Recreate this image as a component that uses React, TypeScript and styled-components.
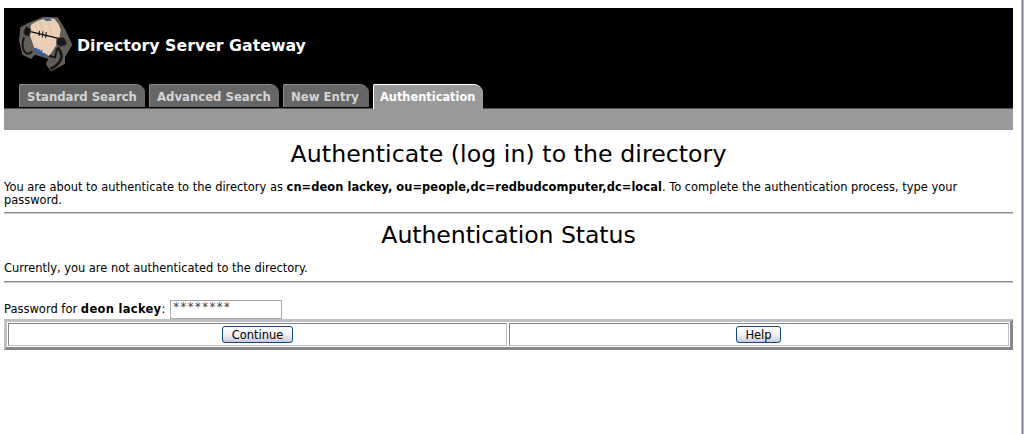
import React from "react";
import styled, { createGlobalStyle } from "styled-components";

const Global = createGlobalStyle`
  html, body { margin: 0; padding: 0; background: #fff; }
  body { font-family: "DejaVu Sans", Verdana, sans-serif; font-size: 11.5px; color: #000; }
`;

const Screen = styled.div`
  width: 1025px;
  height: 434px;
  overflow: hidden;
  display: flex;
  background: #fff;
`;

const Page = styled.div`
  width: 1009px;
  margin-left: 4px;
  padding-top: 8px;
`;

const WindowEdge = styled.div`
  width: 3px;
  margin-left: 8px;
  height: 434px;
  background: linear-gradient(90deg, #c8c8d4 0 1px, #76769a 1px 2px, #b8b8c8 2px 3px);
`;

const Header = styled.div`
  background: #000;
  height: 100px;
  display: flex;
  flex-direction: column;
`;

const Brand = styled.div`
  display: flex;
  align-items: center;
  height: 76px;
  padding-left: 11px;
`;

const LogoMark = styled.svg`
  width: 60px;
  height: 60px;
  margin-bottom: 4px;
  flex: none;
`;

const BrandTitle = styled.div`
  color: #fff;
  font-size: 15.75px;
  font-weight: bold;
  margin-left: 2px;
  margin-top: -1px;
`;

const Tabs = styled.div`
  display: flex;
  gap: 4px;
  padding-left: 15px;
  height: 24px;
`;

const Tab = styled.div<{ $active?: boolean; $w: number }>`
  width: ${(p) => p.$w}px;
  box-sizing: border-box;
  height: ${(p) => (p.$active ? 25 : 23)}px;
  background: ${(p) => (p.$active ? "#999" : "#666")};
  color: ${(p) => (p.$active ? "#fff" : "#d4d4d4")};
  border-top: 1px solid ${(p) => (p.$active ? "#fff" : "#888")};
  border-left: 1px solid ${(p) => (p.$active ? "#fff" : "#888")};
  border-top-right-radius: 9px;
  border-top-left-radius: 2px;
  font-size: ${(p) => (p.$active ? 11.4 : 11.7)}px;
  font-weight: bold;
  line-height: 24px;
  padding-left: ${(p) => (p.$active ? 6 : 7)}px;
  white-space: nowrap;
  position: relative;
  z-index: 1;
`;

const SubBar = styled.div`
  height: 22px;
  background: #999;
  border-top: 1px solid #555;
  box-sizing: border-box;
`;

const Heading = styled.h1<{ $top: number; $track: number }>`
  margin: ${(p) => p.$top}px 0 0;
  font-size: 23.65px;
  font-weight: normal;
  line-height: 29px;
  letter-spacing: ${(p) => p.$track}px;
  text-align: center;
`;

const Paragraph = styled.p`
  margin: 12px 0 0;
  font-size: 11.45px;
  line-height: 13px;
`;

const Emphasis = styled.b<{ $track: number }>`
  letter-spacing: ${(p) => p.$track}px;
`;

const Rule = styled.hr<{ $top: number }>`
  margin: ${(p) => p.$top}px 0 0;
  height: 0;
  border: none;
  border-top: 1px solid #888;
  border-bottom: 1px solid #ccc;
`;

const FieldRow = styled.div`
  display: flex;
  align-items: center;
  margin-top: 16px;
  height: 20px;
`;

const PasswordInput = styled.input`
  box-sizing: border-box;
  width: 112px;
  height: 19px;
  margin-left: 5px;
  border: 1px solid #aaa;
  padding: 0 2px 4px;
  font-family: "DejaVu Sans", sans-serif;
  font-size: 11.5px;
  letter-spacing: 1.5px;
  color: #444;
  background: #fff;
  outline: none;
`;

const ButtonTable = styled.div`
  box-sizing: border-box;
  width: 1009px;
  height: 31px;
  border: 3px solid;
  border-color: #c0c0c0 #888 #888 #c0c0c0;
  padding: 1px;
  display: grid;
  grid-template-columns: 499px 500px;
  gap: 2px;
`;

const ButtonCell = styled.div<{ $inset?: number }>`
  box-sizing: border-box;
  border: 1px solid;
  border-color: #888 #c0c0c0 #c0c0c0 #888;
  padding-right: ${(p) => p.$inset ?? 0}px;
  display: flex;
  align-items: center;
  justify-content: center;
`;

const Button = styled.button<{ $w: number }>`
  width: ${(p) => p.$w}px;
  height: 17px;
  box-sizing: border-box;
  padding: 0;
  border: 1px solid #0f4a80;
  border-radius: 3px;
  background: linear-gradient(180deg, #ffffff 0%, #f4f4f8 45%, #d8d8e6 85%, #c4c4d6 100%);
  font-family: "DejaVu Sans", sans-serif;
  font-size: 11.5px;
  color: #000;
  line-height: 14px;
`;

const Logo = () => (
  <LogoMark viewBox="0 0 180 180" aria-hidden="true">
    <path d="M38 28 L85 8 L128 10 L150 45 L172 92 L150 130 L150 150 L108 172 L92 150 L100 135 L60 122 L48 135 L22 122 L12 80 L16 40 Z" fill="#8b837b" opacity="0.7" />
    <path d="M48 32 Q66 18 88 14 L118 14 Q132 28 137 46 L132 82 L102 126 L58 102 L44 62 Z" fill="#e9cfb6" />
    <path d="M60 28 L74 64 M74 22 L92 70 M96 16 L114 70" stroke="#cdb49c" strokeWidth="2" />
    <path d="M84 14 L104 14 L112 20 L92 20 Z" fill="#2f5f9c" />
    <path d="M52 108 L96 124 M60 103 L82 112 M66 116 L88 126" stroke="#2a62ad" strokeWidth="5" strokeDasharray="7 2" />
    <path d="M34 50 L142 76" stroke="#0c0c0c" strokeWidth="4" />
    <path d="M74 50 L72 66 M84 52 L82 70 M94 54 L92 72" stroke="#0c0c0c" strokeWidth="3" />
    <path d="M36 36 Q24 44 26 58 Q32 70 44 66 L48 46 Z" fill="#161616" stroke="#5e5e5e" strokeWidth="2" />
    <path d="M126 72 L146 70 Q158 80 154 94 L136 98 L124 90 Z" fill="#1a1a1a" stroke="#555" strokeWidth="2" />
    <path d="M27 70 Q18 96 28 112 Q38 126 52 112" fill="none" stroke="#161616" strokeWidth="6" />
    <path d="M128 100 Q146 122 136 140 Q122 160 106 164" fill="none" stroke="#161616" strokeWidth="8" />
    <path d="M102 126 L120 130 L126 104" fill="none" stroke="#161616" strokeWidth="6" />
  </LogoMark>
);

const tabs = [
  { label: "Standard Search", w: 126 },
  { label: "Advanced Search", w: 130 },
  { label: "New Entry", w: 86 },
  { label: "Authentication", w: 110, active: true },
];

export default function App() {
  return (
    <Screen>
      <Global />
      <Page>
        <Header>
          <Brand>
            <Logo />
            <BrandTitle>Directory Server Gateway</BrandTitle>
          </Brand>
          <Tabs>
            {tabs.map((t) => (
              <Tab key={t.label} $w={t.w} $active={t.active}>{t.label}</Tab>
            ))}
          </Tabs>
        </Header>
        <SubBar />
        <Heading $top={10} $track={0.05}>Authenticate (log in) to the directory</Heading>
        <Paragraph>
          You are about to authenticate to the directory as <Emphasis $track={0.06}>cn=deon lackey, ou=people,dc=redbudcomputer,dc=local</Emphasis>. To complete the authentication process, type your password.
        </Paragraph>
        <Rule $top={5} />
        <Heading as="h2" $top={7} $track={-0.1}>Authentication Status</Heading>
        <Paragraph>Currently, you are not authenticated to the directory.</Paragraph>
        <Rule $top={6} />
        <FieldRow>
          <span>Password for <Emphasis $track={0.3}>deon lackey</Emphasis>:</span>
          <PasswordInput type="text" readOnly value="********" />
        </FieldRow>
        <ButtonTable>
          <ButtonCell><Button $w={71}>Continue</Button></ButtonCell>
          <ButtonCell $inset={1}><Button $w={45}>Help</Button></ButtonCell>
        </ButtonTable>
      </Page>
      <WindowEdge />
    </Screen>
  );
}
